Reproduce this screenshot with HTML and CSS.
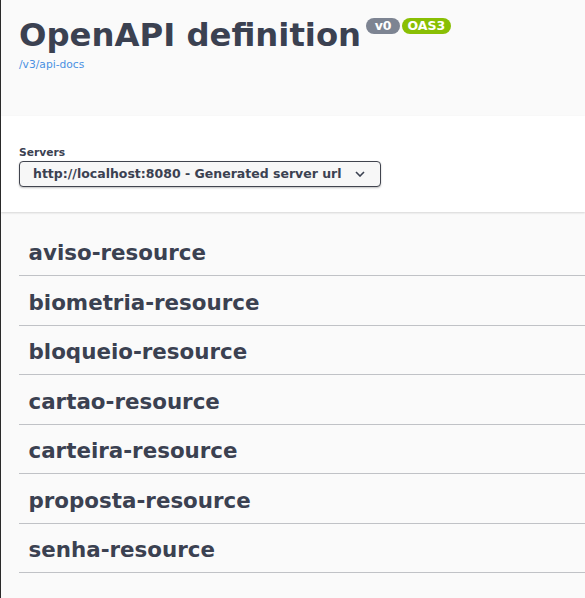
FILE: index.html
```html
<!DOCTYPE html>
<html>
<head>
<meta charset="utf-8">
<link rel="stylesheet" href="styles.css">
</head>
<body>
<div class="page">
  <section class="info">
    <h2 class="title">OpenAPI definition <span class="badges"><span class="badge badge-version">v0</span><span class="badge badge-oas">OAS3</span></span></h2>
    <a class="spec-link" href="#">/v3/api-docs</a>
  </section>
  <section class="schemes">
    <label class="servers-label">Servers</label>
    <div class="server-select">
      <span class="server-value">http://localhost:8080 - Generated server url</span>
      <svg class="chevron" width="10" height="6" viewBox="0 0 10 6"><path d="M1 1 L5 5 L9 1" fill="none" stroke="#3b4151" stroke-width="1.6"/></svg>
    </div>
  </section>
  <section class="tags">
    <h3 class="tag">aviso-resource</h3>
    <h3 class="tag">biometria-resource</h3>
    <h3 class="tag">bloqueio-resource</h3>
    <h3 class="tag">cartao-resource</h3>
    <h3 class="tag">carteira-resource</h3>
    <h3 class="tag">proposta-resource</h3>
    <h3 class="tag">senha-resource</h3>
  </section>
</div>
</body>
</html>
```
FILE: styles.css
```css
html, body {
  margin: 0;
  padding: 0;
  height: 100%;
}
body {
  background: #fafafa;
  font-family: "DejaVu Sans", sans-serif;
  color: #3b4151;
  border-left: 1px solid #2a2a2a;
  box-sizing: border-box;
  overflow: hidden;
}
.info {
  padding: 15px 0 0 18px;
  height: 101px;
}
.title {
  margin: 0;
  font-size: 32.3px;
  font-weight: 700;
  line-height: 40px;
  color: #3b4151;
  display: flex;
  align-items: flex-start;
  white-space: nowrap;
}
.badges {
  display: flex;
  gap: 2px;
  margin-left: 5px;
  margin-top: 3px;
}
.badge {
  display: inline-block;
  font-size: 12.5px;
  line-height: 16px;
  border-radius: 8px;
  color: #fff;
  font-weight: 700;
}
.badge-version { background: #7d8492; padding: 0 8.5px; }
.badge-oas { background: #89bf04; padding: 0 5.5px; }
.spec-link {
  display: block;
  font-size: 10.7px;
  line-height: 14px;
  color: #4990e2;
  text-decoration: none;
  margin-top: 3px;
}
.schemes {
  background: #fff;
  box-shadow: 0 1px 2px 0 rgba(0, 0, 0, 0.15);
  padding: 30px 0 25.5px 18px;
}
.servers-label {
  display: block;
  font-size: 10.7px;
  font-weight: 700;
  line-height: 14px;
  margin-bottom: 1px;
}
.server-select {
  width: 362px;
  height: 25.5px;
  box-sizing: border-box;
  border: 1px solid #41444e;
  border-radius: 4px;
  box-shadow: 0 1px 2px 0 rgba(0, 0, 0, 0.25);
  background: #f7f7f7;
  display: flex;
  align-items: center;
  justify-content: space-between;
  padding: 0 15px 0 13px;
}
.server-value {
  font-size: 12.5px;
  font-weight: 700;
  color: #3b4151;
}
.chevron { display: block; }
.tags {
  margin-top: 19px;
  padding-left: 18px;
}
.tag {
  margin: 0 0 4.5px;
  padding: 7px 0 7px 9.5px;
  font-size: 21.4px;
  line-height: 30px;
  font-weight: 700;
  color: #3b4151;
  border-bottom: 1px solid rgba(59, 65, 81, 0.3);
}
```
